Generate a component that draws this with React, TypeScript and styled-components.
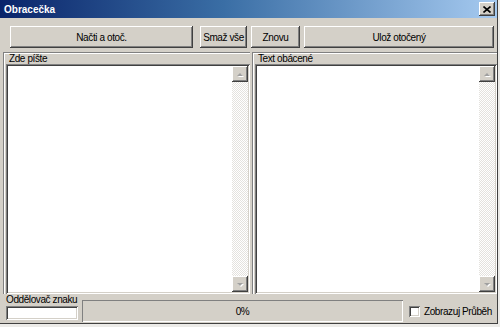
import styled, { createGlobalStyle } from 'styled-components';

const GlobalStyle = createGlobalStyle`
  html, body {
    margin: 0;
    padding: 0;
    background: #ecebe8;
  }
  body {
    font-family: "Liberation Sans", Arial, sans-serif;
    font-size: 10px;
    letter-spacing: -0.4px;
    color: #000;
  }
`;

const bevelOut = `
  box-shadow: inset -1px -1px #404040, inset 1px 1px #ffffff,
    inset -2px -2px #808080, inset 2px 2px #d4d0c8;
`;

const sunken = `
  box-shadow: inset 1px 1px #808080, inset -1px -1px #ffffff,
    inset 2px 2px #404040, inset -2px -2px #d4d0c8;
`;

export default function App() {
  return (
    <>
      <GlobalStyle />
      <Window>
        <TitleBar>
          <Title>Obracečka</Title>
          <CloseButton>
            <svg width="8" height="7" viewBox="0 0 8 7">
              <path d="M0.5 0.5 L7.5 6.5 M7.5 0.5 L0.5 6.5" stroke="#000" strokeWidth="1.6" />
            </svg>
          </CloseButton>
        </TitleBar>

        <Toolbar>
          <Button $w={183}>Načti a otoč.</Button>
          <Button $w={47} $ml={7}>Smaž vše</Button>
          <Button $w={49} $ml={4}>Znovu</Button>
          <Button $w={190} $ml={4}>Ulož otočený</Button>
        </Toolbar>

        <Panels>
          <Group>
            <Caption>Zde píšte</Caption>
            <Memo>
              <MemoBody />
              <ScrollBar>
                <ArrowButton><Arrow $dir="up" /></ArrowButton>
                <Track />
                <ArrowButton><Arrow $dir="down" /></ArrowButton>
              </ScrollBar>
            </Memo>
          </Group>
          <Group>
            <Caption>Text obácené</Caption>
            <Memo>
              <MemoBody />
              <ScrollBar>
                <ArrowButton><Arrow $dir="up" /></ArrowButton>
                <Track />
                <ArrowButton><Arrow $dir="down" /></ArrowButton>
              </ScrollBar>
            </Memo>
          </Group>
        </Panels>

        <StatusRow>
          <SeparatorField>
            <FieldLabel>Oddělovač znaku</FieldLabel>
            <Input />
          </SeparatorField>
          <Progress>0%</Progress>
          <CheckRow>
            <CheckBox />
            <span>Zobrazuj Průběh</span>
          </CheckRow>
        </StatusRow>
      </Window>
    </>
  );
}

const Window = styled.div`
  width: 497px;
  height: 323px;
  background: #d4d0c8;
  border-right: 1px solid #404040;
  border-bottom: 1px solid #404040;
  display: flex;
  flex-direction: column;
`;

const TitleBar = styled.div`
  height: 18px;
  display: flex;
  align-items: center;
  justify-content: space-between;
  padding: 0 2px 0 4px;
  background: linear-gradient(to right, #0a246a 0%, #3a6ea5 45%, #a6caf0 100%);
`;

const Title = styled.span`
  color: #fff;
  font-weight: bold;
  font-size: 10px;
  letter-spacing: 0;
`;

const CloseButton = styled.div`
  width: 16px;
  height: 14px;
  background: #d4d0c8;
  display: flex;
  align-items: center;
  justify-content: center;
  ${bevelOut}
`;

const Toolbar = styled.div`
  display: flex;
  padding: 8px 0 0 10px;
`;

const Button = styled.div<{ $w: number; $ml?: number }>`
  width: ${(p) => p.$w}px;
  margin-left: ${(p) => p.$ml ?? 0}px;
  height: 22px;
  display: flex;
  align-items: center;
  justify-content: center;
  background: #d4d0c8;
  white-space: nowrap;
  ${bevelOut}
`;

const Panels = styled.div`
  display: grid;
  grid-template-columns: 247px 245px;
  gap: 2px;
  padding: 4px 0 0 3px;
  height: 242px;
`;

const Group = styled.div`
  border-top: 1px solid #808080;
  border-left: 1px solid #808080;
  box-shadow: inset 1px 1px #ffffff;
  display: flex;
  flex-direction: column;
  padding: 0 0 0 2px;
`;

const Caption = styled.div`
  height: 11px;
  line-height: 11px;
  padding-left: 3px;
`;

const Memo = styled.div`
  flex: 1;
  display: flex;
  background: #fff;
  ${sunken}
  padding: 2px;
`;

const MemoBody = styled.div`
  flex: 1;
`;

const ScrollBar = styled.div`
  width: 16px;
  display: flex;
  flex-direction: column;
`;

const ArrowButton = styled.div`
  height: 16px;
  background: #d4d0c8;
  display: flex;
  align-items: center;
  justify-content: center;
  ${bevelOut}
`;

const Arrow = styled.div<{ $dir: 'up' | 'down' }>`
  width: 0;
  height: 0;
  border-left: 3px solid transparent;
  border-right: 3px solid transparent;
  ${(p) => (p.$dir === 'up' ? 'border-bottom: 3px solid #a0a0a0;' : 'border-top: 3px solid #a0a0a0;')}
  filter: drop-shadow(1px 1px 0 #ffffff);
`;

const Track = styled.div`
  flex: 1;
  background: repeating-conic-gradient(#ffffff 0 25%, #e4e2de 0 50%) 0 0 / 2px 2px;
`;

const StatusRow = styled.div`
  display: flex;
  align-items: flex-end;
  padding: 2px 0 0 6px;
  height: 26px;
`;

const SeparatorField = styled.div`
  width: 72px;
  display: flex;
  flex-direction: column;
`;

const FieldLabel = styled.div`
  height: 11px;
  line-height: 10px;
  white-space: nowrap;
`;

const Input = styled.div`
  height: 14px;
  margin-bottom: 2px;
  background: #fff;
  ${sunken}
`;

const Progress = styled.div`
  width: 321px;
  height: 22px;
  margin-left: 4px;
  display: flex;
  align-items: center;
  justify-content: center;
  box-shadow: inset 1px 1px #808080, inset -1px -1px #ffffff;
`;

const CheckRow = styled.div`
  display: flex;
  align-items: center;
  gap: 4px;
  margin-left: 6px;
  height: 22px;
  white-space: nowrap;
`;

const CheckBox = styled.div`
  width: 11px;
  height: 11px;
  background: #fff;
  ${sunken}
`;
